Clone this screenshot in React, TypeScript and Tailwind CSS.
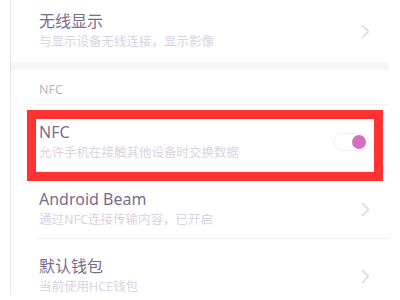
import React from 'react';

const font = { fontFamily: '"Noto Sans", "Noto Sans CJK SC", sans-serif' };

const Chevron = () => (
  <svg width="9" height="15" viewBox="0 0 9 15" fill="none">
    <polyline points="1.5,1.5 7.5,7.5 1.5,13.5" stroke="#d6d3dc" strokeWidth="1.4" strokeLinecap="round" strokeLinejoin="round" />
  </svg>
);

interface RowProps {
  title: string;
  subtitle: string;
  right: React.ReactNode;
  divider?: boolean;
  className?: string;
}

const Row: React.FC<RowProps> = ({ title, subtitle, right, divider = true, className = '' }) => (
  <div className={`relative ${className}`}>
    <div className="flex h-full items-start pl-[28px] pr-[19px] pt-[17px]">
      <div className="flex-1">
        <div className="text-[16px] leading-[20px] text-[#7b6c90]">{title}</div>
        <div className="mt-[2px] text-[12.5px] leading-[17px] text-[#dad2e3]">{subtitle}</div>
      </div>
      <div className="flex h-[40px] items-center">{right}</div>
    </div>
    {divider && <div className="absolute bottom-0 left-[25px] right-0 border-t border-[#f0eef2]" />}
  </div>
);

export default function App() {
  return (
    <div className="h-[300px] w-[400px] overflow-hidden bg-white pl-[10px]" style={font}>
      <div className="h-full w-[379px] border-l border-[#e6e4e8]">
        {/* 无线显示 */}
        <div className="mt-[-5px]">
          <Row title="无线显示" subtitle="与显示设备无线连接，显示影像" right={<Chevron />} divider={false} className="h-[67px] [&>div]:pt-[16px]" />
        </div>
        <div className="h-[8px] bg-[#f6f5f8]" />

        {/* section header */}
        <div className="relative h-[35px] pl-[28px] pt-[12px] text-[12.5px] leading-[16px] text-[#bdb5c8]">
          NFC
          <div className="absolute bottom-0 left-[25px] right-0 border-t border-[#f0eef2]" />
        </div>

        {/* NFC toggle row */}
        <div className="relative">
          <Row
            title="NFC"
            subtitle="允许手机在接触其他设备时交换数据"
            className="h-[67px]"
            right={
              <div className="mr-[1px] flex h-[18px] w-[36px] items-center justify-end rounded-full border border-[#f2f0f4] bg-white pr-[2px]">
                <div className="h-[14px] w-[14px] rounded-full bg-[#d36fc3]" />
              </div>
            }
          />
          <div className="absolute left-[16px] top-[5px] h-[71px] w-[356px] border-[9px] border-[#ff3232]" />
        </div>

        <Row title="Android Beam" subtitle="通过NFC连接传输内容，已开启" right={<Chevron />} className="h-[67px]" />
        <Row title="默认钱包" subtitle="当前使用HCE钱包" right={<Chevron />} className="h-[67px]" divider={false} />
      </div>
    </div>
  );
}
